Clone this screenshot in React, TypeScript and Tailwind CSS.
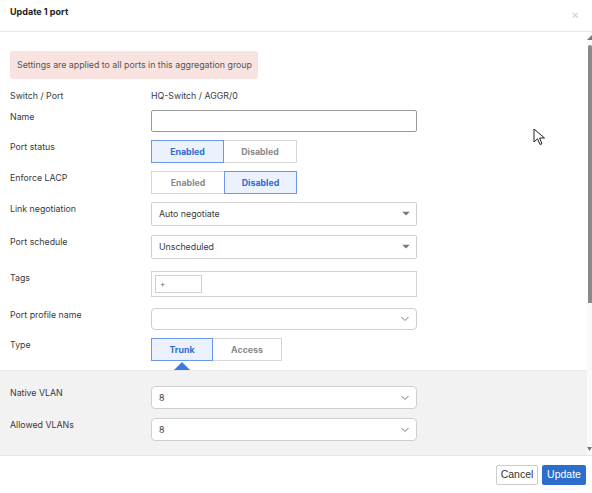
import React from "react";

const font = { fontFamily: "Inter, 'Noto Sans', sans-serif" };

const Label = ({ text }: { text: string }) => (
  <div className="w-[141px] shrink-0 text-[8.8px] leading-[12px] pt-[1px] text-[#3a3a3a]">{text}</div>
);

const Toggle = ({
  options,
  active,
  widths,
}: {
  options: string[];
  active: number;
  widths: number[];
}) => (
  <div className="flex h-[23px]">
    {options.map((o, i) =>
      i === active ? (
        <div
          key={o}
          style={{ width: widths[i] }}
          className="flex items-center justify-center border border-[#6b98ea] bg-[#ebf2fe] text-[8.8px] font-bold text-[#2f6bd6]"
        >
          {o}
        </div>
      ) : (
        <div
          key={o}
          style={{ width: widths[i] }}
          className={`flex items-center justify-center border border-[#d6d6d6] bg-white text-[8.8px] font-bold text-[#8a8a8a] ${
            i === 0 ? "border-r-0" : "border-l-0"
          }`}
        >
          {o}
        </div>
      )
    )}
  </div>
);

const Caret = () => (
  <svg width="8" height="5" viewBox="0 0 8 5" className="absolute right-[6px] top-1/2 -translate-y-1/2">
    <path d="M0 0 L8 0 L4 4 Z" fill="#777" />
  </svg>
);

const Chevron = () => (
  <svg width="8" height="5" viewBox="0 0 8 5" className="absolute right-[7px] top-1/2 -translate-y-1/2">
    <path d="M0.5 0.5 L4 4 L7.5 0.5" fill="none" stroke="#777" strokeWidth="1" />
  </svg>
);

const Select = ({
  value,
  h,
  chevron,
  rounded,
}: {
  value: string;
  h: number;
  chevron?: boolean;
  rounded?: boolean;
}) => (
  <div
    style={{ height: h }}
    className={`relative w-[266px] flex items-center border border-[#cfcfcf] bg-white pl-[7px] text-[8.8px] text-[#3a3a3a] ${
      rounded ? "rounded-[4px]" : "rounded-[2px]"
    }`}
  >
    {value}
    {chevron ? <Chevron /> : <Caret />}
  </div>
);

export default function App() {
  return (
    <div style={font} className="relative w-[592px] h-[493px] bg-white overflow-hidden flex flex-col">
      {/* header */}
      <div className="h-[32px] shrink-0 border-b border-[#e6e6e6] flex items-start justify-between px-[10px] pt-[5px]">
        <span className="text-[9px] font-bold text-[#222]">Update 1 port</span>
        <span className="text-[10px] leading-none text-[#d0d0d0] pt-[5px] pr-[3px]">✕</span>
      </div>

      {/* body */}
      <div className="flex-1 flex min-h-0">
        <div className="flex-1 flex flex-col">
          <div className="px-[10px] pt-[19px] flex flex-col">
            <div className="w-[248px] h-[28px] rounded-[3px] bg-[#f9e3e0] flex items-center pl-[7px] text-[8.8px] whitespace-nowrap text-[#555]">
              Settings are applied to all ports in this aggregation group
            </div>

            <div className="flex mt-[10px] h-[14px] items-center">
              <div className="w-[141px] text-[8.8px] text-[#3a3a3a]">Switch / Port</div>
              <div className="text-[8.8px] text-[#3a3a3a]">HQ-Switch / AGGR/0</div>
            </div>

            <div className="flex mt-[7px]">
              <Label text="Name" />
              <div className="w-[266px] h-[22px] border border-[#9a9a9a] rounded-[2px]" />
            </div>

            <div className="flex mt-[8px]">
              <Label text="Port status" />
              <Toggle options={["Enabled", "Disabled"]} active={0} widths={[73, 73]} />
            </div>

            <div className="flex mt-[8px]">
              <Label text="Enforce LACP" />
              <Toggle options={["Enabled", "Disabled"]} active={1} widths={[73, 73]} />
            </div>

            <div className="flex mt-[8px]">
              <Label text="Link negotiation" />
              <Select value="Auto negotiate" h={24} />
            </div>

            <div className="flex mt-[9px]">
              <Label text="Port schedule" />
              <Select value="Unscheduled" h={24} />
            </div>

            <div className="flex mt-[12px]">
              <Label text="Tags" />
              <div className="w-[266px] h-[26px] border border-[#d2d2d2] p-[3px]">
                <div className="w-[47px] h-[18px] border border-[#cfcfcf] flex items-center pl-[4px] text-[8px] text-[#666]">
                  +
                </div>
              </div>
            </div>

            <div className="flex mt-[11px]">
              <Label text="Port profile name" />
              <Select value="" h={22} chevron rounded />
            </div>

            <div className="flex mt-[8px]">
              <Label text="Type" />
              <div className="flex flex-col">
                <Toggle options={["Trunk", "Access"]} active={0} widths={[62, 69]} />
                <svg width="16" height="8" viewBox="0 0 16 8" className="ml-[23px] mt-[1px]">
                  <path d="M0 8 L8 0 L16 8 Z" fill="#3b78e0" />
                </svg>
              </div>
            </div>
          </div>

          <div className="flex-1 bg-[#f2f2f2] border-t border-[#e8e8e8] px-[10px] pt-[15px]">
            <div className="flex">
              <Label text="Native VLAN" />
              <Select value="8" h={23} chevron rounded />
            </div>
            <div className="flex mt-[9px]">
              <Label text="Allowed VLANs" />
              <Select value="8" h={23} chevron rounded />
            </div>
          </div>
        </div>

        {/* scrollbar */}
        <div className="w-[5px] shrink-0 bg-[#fafafa] flex flex-col items-center pt-[3px]">
          <svg width="5" height="5" viewBox="0 0 5 5">
            <path d="M0 5 L5 0 L5 5 Z" fill="#777" />
          </svg>
          <div className="w-[4px] h-[258px] mt-[5px] ml-[1px] rounded-t-[2px] bg-[#8a8a8a]" />
          <div className="flex-1" />
          <svg width="5" height="5" viewBox="0 0 5 5" className="mb-[3px]">
            <path d="M0 0 L5 0 L2.5 4 Z" fill="#777" />
          </svg>
        </div>
      </div>

      {/* footer */}
      <div
        style={{ fontFamily: "'Liberation Sans', Arial, sans-serif" }}
        className="h-[38px] shrink-0 border-t border-[#e6e6e6] flex items-center justify-end gap-[4px] pr-[6px] pt-[1px]"
      >
        <button className="w-[42px] h-[20px] border border-[#cccccc] rounded-[2px] bg-white text-[10.5px] text-[#333]">
          Cancel
        </button>
        <button className="w-[44px] h-[20px] rounded-[2px] bg-[#2c6ecb] text-[10.5px] text-white">
          Update
        </button>
      </div>

      {/* mouse pointer */}
      <svg width="14" height="19" viewBox="0 0 14 19" className="absolute left-[533px] top-[128px]">
        <path d="M1 1 L1 14 L4.5 10.8 L7 16.5 L9 15.6 L6.6 10 L11.5 10 Z" fill="white" stroke="#222" strokeWidth="1" strokeLinejoin="round" />
      </svg>
    </div>
  );
}
